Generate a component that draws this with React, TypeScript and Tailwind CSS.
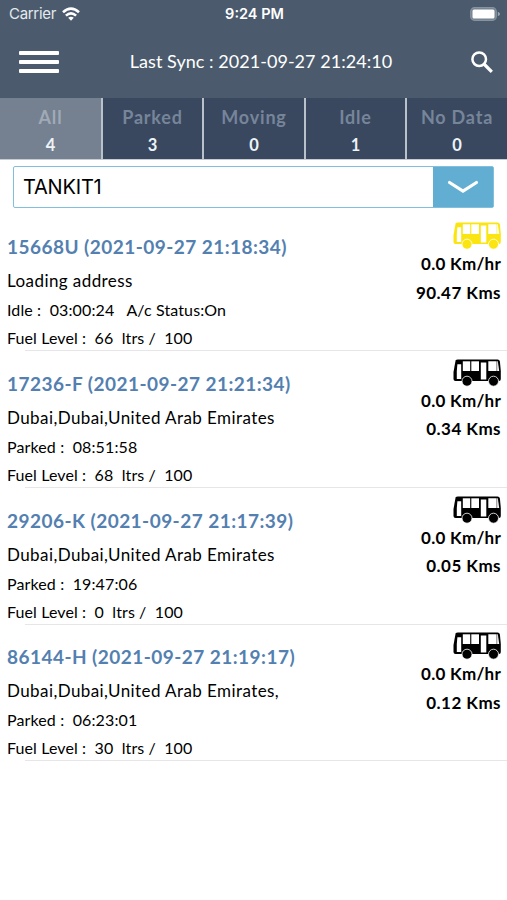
import React from "react";

const TABS = [
  { label: "All", count: 4 },
  { label: "Parked", count: 3 },
  { label: "Moving", count: 0 },
  { label: "Idle", count: 1 },
  { label: "No Data", count: 0 },
];

const VEHICLES = [
  {
    title: "15668U (2021-09-27 21:18:34)",
    address: "Loading address",
    status: "Idle :  03:00:24   A/c Status:On",
    fuel: "Fuel Level :  66  ltrs /  100",
    speed: "0.0 Km/hr",
    distance: "90.47 Kms",
    color: "text-[#fbe511]",
  },
  {
    title: "17236-F (2021-09-27 21:21:34)",
    address: "Dubai,Dubai,United Arab Emirates",
    status: "Parked :  08:51:58",
    fuel: "Fuel Level :  68  ltrs /  100",
    speed: "0.0 Km/hr",
    distance: "0.34 Kms",
    color: "text-black",
  },
  {
    title: "29206-K (2021-09-27 21:17:39)",
    address: "Dubai,Dubai,United Arab Emirates",
    status: "Parked :  19:47:06",
    fuel: "Fuel Level :  0  ltrs /  100",
    speed: "0.0 Km/hr",
    distance: "0.05 Kms",
    color: "text-black",
  },
  {
    title: "86144-H (2021-09-27 21:19:17)",
    address: "Dubai,Dubai,United Arab Emirates,",
    status: "Parked :  06:23:01",
    fuel: "Fuel Level :  30  ltrs /  100",
    speed: "0.0 Km/hr",
    distance: "0.12 Kms",
    color: "text-black",
  },
];

function BusIcon({ className }: { className: string }) {
  return (
    <svg viewBox="0 0 48 28" className={`h-7 w-12 ${className}`} fill="currentColor">
      <path d="M2.600 1.500 Q3 .4 5 .4 L44.500 .4 Q46.600 .4 46.900 2.500 L47.800 12 V20 Q47.800 22 46 22 H2.500 Q.5 22 .5 20 V13 Z" />
      {/* Windows and doors */}
      <g fill="white">
        <path d="M4.400 5.200 H8.200 V20 H3.800 V12 Z" />
        <path d="M9.800 2.300 H17.200 V12 H9.800 Z" />
        <path d="M18.300 2.300 H26 V12 H18.300 Z" />
        <path d="M27.800 3.500 H33.300 V20.500 H27.800 Z" />
        <path d="M35.300 2.300 H44.800 L46.200 12 H35.300 Z" />
      </g>
      <path d="M43.800 2 V12" stroke="currentColor" strokeWidth=".5" />
      {/* Wheels */}
      <g stroke="white" strokeWidth=".8">
        <circle cx="14" cy="22.200" r="5" />
        <circle cx="40.500" cy="22.200" r="5" />
      </g>
    </svg>
  );
}

function StatusBar() {
  return (
    <div className="grid h-7 grid-cols-3 items-center pl-[9px] pr-[7px] font-['Inter',sans-serif]">
      <div className="flex items-center gap-[6px] text-[15px] tracking-[-0.3px]">
        <span className="text-[#e4e9ee]">Carrier</span>
        <svg viewBox="0 0 18 14" className="h-[14px] w-[18px]" fill="none" stroke="white" strokeWidth="2.600">
          <path d="M1 5.200 Q9 -2 17 5.200" />
          <path d="M3.900 8.600 Q9 4 14.100 8.600" />
          <path d="M9 13.700 L6.200 10.800 Q9 8.600 11.800 10.800 Z" fill="white" stroke="none" />
        </svg>
      </div>
      <span className="text-center text-[14.500px] font-semibold">9:24 PM</span>
      <svg viewBox="0 0 30 14" className="h-[14px] w-[30px] justify-self-end" fill="none">
        <rect x=".7" y=".7" width="25.600" height="12.600" rx="3.800" fill="#74818f" stroke="#8793a0" strokeWidth="1.200" />
        <rect x="2.500" y="2.500" width="22" height="9" rx="1.500" fill="white" />
        <path d="M27.800 4.800 Q30 5.500 30 7 Q30 8.500 27.800 9.200 Z" fill="#9aa6b2" />
      </svg>
    </div>
  );
}

export default function App() {
  return (
    <div className="flex h-[900px] w-[507px] flex-col overflow-hidden bg-white font-['Lato',sans-serif] text-black">
      <header className="h-[98px] bg-[#4b5b6d] text-white">
        <StatusBar />
        <div className="flex h-[68px] items-center justify-between pl-[19px] pr-[14px]">
          <div className="flex w-10 flex-col gap-[5px]">
            <span className="h-1 rounded-[1px] bg-white" />
            <span className="h-1 rounded-[1px] bg-white" />
            <span className="h-1 rounded-[1px] bg-white" />
          </div>
          <span className="mr-[8px] pb-[2px] text-[18px] tracking-[0.040px]">Last Sync : 2021-09-27 21:24:10</span>
          <svg viewBox="0 0 22 22" className="h-[22px] w-[22px]" fill="none" stroke="white">
            <circle cx="8.200" cy="8.200" r="6.800" strokeWidth="2.500" />
            <path d="M13 13 L20.800 20.800" strokeWidth="3.200" />
          </svg>
        </div>
      </header>

      {/* Status filter */}
      <div className="grid h-[62px] grid-cols-[103px_101px_102px_101px_100px] border-b border-[#c5ccd3] bg-[#39485f]">
        {TABS.map((tab, i) => (
          <div
            key={tab.label}
            className={`flex flex-col items-center pt-[5px] ${i === 0 ? "bg-[#758190]" : ""} ${i < 4 ? "border-r-2 border-[#b9c1ca]" : ""}`}
          >
            <span className={`text-[18px] leading-7 font-bold tracking-[0.8px] ${i === 0 ? "text-[#a0aab7]" : "text-[#76859a]"}`}>
              {tab.label}
            </span>
            <span className="text-[16.500px] leading-7 font-bold text-[#edf3f8]">{tab.count}</span>
          </div>
        ))}
      </div>

      {/* Group select */}
      <div className="mx-[13px] mt-[6px] flex h-[42px] shrink-0 rounded-[2px] border border-[#82bfdc]">
        <span className="flex-1 pl-[9px] font-['Inter',sans-serif] text-[20px] leading-[41px] tracking-[-0.2px]">TANKIT1</span>
        <div className="flex w-[60px] items-center justify-center bg-[#62aed2]">
          <svg viewBox="0 0 32 14" className="h-[14px] w-8" fill="none" stroke="white" strokeWidth="3.200" strokeLinecap="round">
            <path d="M2.500 2.500 L16 11 L29.500 2.500" />
          </svg>
        </div>
      </div>

      <div className="mt-[5px] flex flex-col">
        {VEHICLES.map((v) => (
          <div key={v.title} className="flex h-[136.750px] flex-col">
            <div className="flex flex-1 justify-between pl-[7px] pr-[6px] whitespace-pre">
              <div className="flex flex-col pt-[18px]">
                <span className="text-[19px] leading-8 font-bold tracking-[0.460px] text-[#5380b0]">{v.title}</span>
                <span className="text-[17px] leading-9 tracking-[0.420px]">{v.address}</span>
                <span className="text-[16px] leading-[22px] tracking-[0.120px]">{v.status}</span>
                <span className="pt-[5px] text-[16px] leading-6 tracking-[0.100px]">{v.fuel}</span>
              </div>
              <div className="flex flex-col items-end pt-[9px]">
                <BusIcon className={v.color} />
                <span className="text-[17px] leading-[27px] font-bold tracking-[0.250px]">{v.speed}</span>
                <span className="pt-[1.500px] text-[17px] leading-7 font-bold tracking-[0.450px]">{v.distance}</span>
              </div>
            </div>
            <div className="ml-[25px] h-px shrink-0 bg-[#e6e6e8]" />
          </div>
        ))}
      </div>
    </div>
  );
}
